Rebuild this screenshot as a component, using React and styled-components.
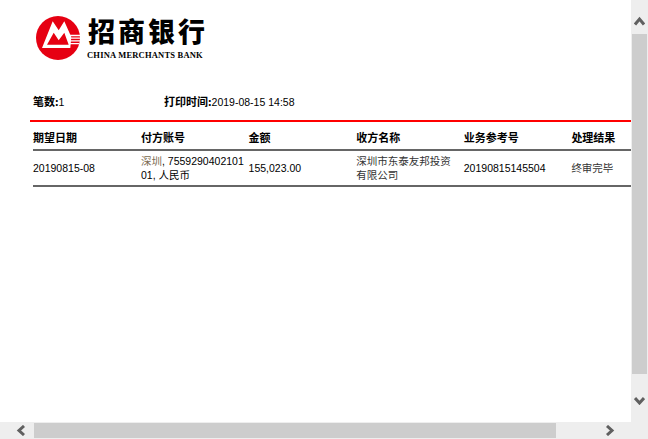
import styled, { createGlobalStyle } from "styled-components";

const GlobalStyle = createGlobalStyle`
  html, body {
    margin: 0;
    padding: 0;
    background: #fff;
    overflow: hidden;
  }
`;

const Page = styled.div`
  width: 648px;
  height: 439px;
  display: grid;
  grid-template-columns: 631px 17px;
  grid-template-rows: 422px 17px;
  background: #eee;
  font-family: "Liberation Sans", "Noto Sans CJK SC", sans-serif;
  font-size: 11px;
  color: #000;
`;

const Content = styled.div`
  background: #fff;
  overflow: hidden;
  padding: 14px 0 0 30px;
`;

const Header = styled.div`
  display: flex;
  align-items: flex-start;
  padding-left: 6px;
  height: 67px;
`;

const BrandText = styled.div`
  display: flex;
  flex-direction: column;
  margin-left: 6px;
`;

const BrandCn = styled.div`
  font-family: "Noto Sans CJK SC", sans-serif;
  font-weight: 900;
  font-size: 27px;
  line-height: 33px;
  letter-spacing: 3px;
  padding-left: 1px;
  white-space: nowrap;
`;

const BrandEn = styled.div`
  font-family: "Liberation Serif", serif;
  font-weight: 700;
  font-size: 8.5px;
  line-height: 10px;
  letter-spacing: 0.2px;
  margin-top: 3px;
  white-space: nowrap;
`;

const Summary = styled.div`
  display: flex;
  height: 41px;
  padding-left: 3px;
  align-items: center;
  border-bottom: 2px solid #f00;
  box-sizing: border-box;
`;

const SummaryItem = styled.div`
  width: ${(p) => p.$width}px;
  white-space: nowrap;
`;

const Latin = styled.span`
  font-size: 10.5px;
`;

const Label = styled.b`
  font-family: "Noto Sans CJK SC", sans-serif;
  font-weight: 700;
`;

const Table = styled.div`
  margin-left: 3px;
  width: 598px;
`;

const HeadRow = styled.div`
  display: grid;
  grid-template-columns: 108px repeat(5, 107.6px);
  height: 24px;
  padding-top: 3px;
  align-items: center;
  border-bottom: 2px solid #666;
`;

const BodyRow = styled.div`
  display: grid;
  grid-template-columns: 108px repeat(5, 107.6px);
  height: 34px;
  align-items: center;
  border-bottom: 2px solid #666;
`;

const HeadCell = styled.div`
  font-family: "Noto Sans CJK SC", sans-serif;
  font-weight: 700;
  white-space: nowrap;
`;

const Cell = styled.div`
  font-size: 10.5px;
  line-height: 14px;
  padding-right: 3px;
  word-break: break-all;
  color: ${(p) => (p.$muted ? "#333" : "#000")};
`;

const Branch = styled.span`
  color: #7a6a50;
`;

const Track = styled.div`
  background: #eee;
  position: relative;
`;

const VThumb = styled.div`
  position: absolute;
  left: 1px;
  top: 34px;
  width: 15px;
  height: 340px;
  background: #cdcdcd;
`;

const HThumb = styled.div`
  position: absolute;
  left: 34px;
  top: 1px;
  width: 522px;
  height: 15px;
  background: #cdcdcd;
`;

const Arrow = styled.svg`
  position: absolute;
  left: ${(p) => p.$x}px;
  top: ${(p) => p.$y}px;
  width: 11px;
  height: 11px;
`;

const Corner = styled.div`
  background: #eee;
`;

const LogoMark = styled.svg`
  flex: none;
  margin-top: 1px;
`;

const Chevron = ({ x, y, d }) => (
  <Arrow $x={x} $y={y} viewBox="0 0 11 11">
    <path d={d} fill="none" stroke="#606060" strokeWidth="3" />
  </Arrow>
);

const Logo = () => (
  <LogoMark width="45" height="46" viewBox="0 0 45 46">
    <circle cx="22" cy="23" r="22" fill="#e60012" />
    <path d="M6 33 L16.7 6.3 L22.7 15.3 L28.3 6.3 L35.3 22 L34.3 33 Z" fill="#fff" />
    <path d="M11 29.7 L17.7 17.7 L22.7 25.3 L28.3 17.7 L32.7 29.7 Z" fill="#e60012" />
    <path d="M33 20.5h11M33 23.2h11M33 25.9h11M33 28.6h10" stroke="#fff" strokeWidth="1.3" />
  </LogoMark>
);

export default function App() {
  return (
    <Page>
      <GlobalStyle />
      <Content>
        <Header>
          <Logo />
          <BrandText>
            <BrandCn>招商银行</BrandCn>
            <BrandEn>CHINA MERCHANTS BANK</BrandEn>
          </BrandText>
        </Header>
        <Summary>
          <SummaryItem $width={131}>
            <Label>笔数:</Label>
            <Latin>1</Latin>
          </SummaryItem>
          <SummaryItem $width={200}>
            <Label>打印时间:</Label>
            <Latin>2019-08-15 14:58</Latin>
          </SummaryItem>
        </Summary>
        <Table>
          <HeadRow>
            <HeadCell>期望日期</HeadCell>
            <HeadCell>付方账号</HeadCell>
            <HeadCell>金额</HeadCell>
            <HeadCell>收方名称</HeadCell>
            <HeadCell>业务参考号</HeadCell>
            <HeadCell>处理结果</HeadCell>
          </HeadRow>
          <BodyRow>
            <Cell>20190815-08</Cell>
            <Cell>
              <Branch>深圳</Branch>, 755929040210101, 人民币
            </Cell>
            <Cell>155,023.00</Cell>
            <Cell $muted>深圳市东泰友邦投资有限公司</Cell>
            <Cell>20190815145504</Cell>
            <Cell $muted>终审完毕</Cell>
          </BodyRow>
        </Table>
      </Content>
      <Track>
        <Chevron x={3} y={15} d="M1 9.5 L5.5 4 L10 9.5" />
        <VThumb />
        <Chevron x={3} y={394} d="M1 4 L5.5 9 L10 4" />
      </Track>
      <Track>
        <Chevron x={16} y={3} d="M8 1 L3 5.5 L8 10" />
        <HThumb />
        <Chevron x={604} y={3} d="M3 1 L8 5.5 L3 10" />
      </Track>
      <Corner />
    </Page>
  );
}
